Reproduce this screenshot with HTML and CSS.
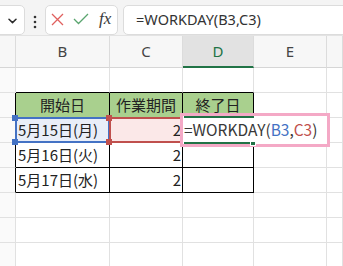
FILE: index.html
```html
<!DOCTYPE html>
<html lang="ja">
<head>
<meta charset="utf-8">
<link rel="stylesheet" href="styles.css">
</head>
<body>
<div class="app">
  <div class="toolbar">
    <div class="namebox">
      <svg class="chev" width="9" height="6" viewBox="0 0 9 6"><path d="M1 1.2 L4.5 4.6 L8 1.2" fill="none" stroke="#2b2b2b" stroke-width="1.5" stroke-linecap="round" stroke-linejoin="round"/></svg>
    </div>
    <svg class="dots" width="4" height="14" viewBox="0 0 4 14"><circle cx="2" cy="2" r="1.3" fill="#333"/><circle cx="2" cy="7" r="1.3" fill="#333"/><circle cx="2" cy="12" r="1.3" fill="#333"/></svg>
    <div class="fxbox">
      <svg class="ico" width="13" height="13" viewBox="0 0 13 13"><path d="M1 1 L12 12 M12 1 L1 12" stroke="#e0605e" stroke-width="1.3" fill="none"/></svg>
      <svg class="ico" width="16" height="12" viewBox="0 0 16 12"><path d="M1 6 L5.5 10.5 L15 1" stroke="#5aa56f" stroke-width="1.3" fill="none"/></svg>
      <span class="fx">fx</span>
    </div>
    <div class="formula">=WORKDAY(B3,C3)</div>
  </div>
  <div class="sheet">
    <div class="c hdr"></div>
    <div class="c hdr">B</div>
    <div class="c hdr">C</div>
    <div class="c hdr act">D</div>
    <div class="c hdr">E</div>
    <div class="c hdr"></div>

    <div class="c rh"></div>
    <div class="c tb"></div>
    <div class="c tb"></div>
    <div class="c tb"></div>
    <div class="c"></div>
    <div class="c"></div>

    <div class="c rh tl"></div>
    <div class="c t th">開始日</div>
    <div class="c t th">作業期間</div>
    <div class="c t th">終了日</div>
    <div class="c"></div>
    <div class="c"></div>

    <div class="c rh tl"></div>
    <div class="c t selb">5月15日(月)
      <div class="bluebox"></div>
      <span class="sq sq-b tlc"></span>
      <span class="sq sq-b blc"></span>
    </div>
    <div class="c t num selr">2
      <div class="redbox"></div>
      <span class="sq sq-r tlc"></span>
      <span class="sq sq-r blc"></span>
    </div>
    <div class="c t act-cell">
      <div class="edit">=WORKDAY(<span class="rb">B3</span>,<span class="rr">C3</span>)
        <span class="gl gtop"></span>
        <span class="gl gbot"></span>
        <span class="handle"></span>
      </div>
    </div>
    <div class="c"></div>
    <div class="c"></div>

    <div class="c rh tl"></div>
    <div class="c t">5月16日(火)</div>
    <div class="c t num">2</div>
    <div class="c t"></div>
    <div class="c"></div>
    <div class="c"></div>

    <div class="c rh tl"></div>
    <div class="c t">5月17日(水)</div>
    <div class="c t num">2</div>
    <div class="c t"></div>
    <div class="c"></div>
    <div class="c"></div>

    <div class="c rh"></div><div class="c"></div><div class="c"></div><div class="c"></div><div class="c"></div><div class="c"></div>
    <div class="c rh"></div><div class="c"></div><div class="c"></div><div class="c"></div><div class="c"></div><div class="c"></div>
    <div class="c rh"></div><div class="c"></div><div class="c"></div><div class="c"></div><div class="c"></div><div class="c"></div>
  </div>
</div>
</body>
</html>
```
FILE: styles.css
```css
* { box-sizing: border-box; }
html, body { margin: 0; padding: 0; background: #fff; }
body { width: 343px; height: 266px; overflow: hidden; font-family: "Noto Sans CJK JP", "Noto Sans", sans-serif; }
.app { width: 343px; height: 266px; overflow: hidden; }

.toolbar {
  height: 36px;
  background: #f4f4f4;
  display: flex;
  align-items: flex-start;
  padding-top: 5px;
  border-bottom: 1px solid #e3e3e3;
}
.namebox {
  width: 30px;
  height: 30px;
  margin-left: -5px;
  background: #fff;
  border: 1px solid #dcdcdc;
  border-radius: 5px;
  display: flex;
  align-items: center;
  justify-content: flex-end;
  padding-right: 7px;
}
.chev { display: block; margin-top: 2px; }
.dots { display: block; margin: 10px 0 0 8px; }
.fxbox {
  margin-left: 8px;
  width: 73px;
  height: 30px;
  background: #fff;
  border: 1px solid #dcdcdc;
  border-radius: 5px;
  display: flex;
  align-items: center;
  padding-left: 5px;
}
.ico { display: block; }
.fxbox .ico:first-child { margin-right: 9px; margin-top: -2px; }
.fxbox .ico:nth-child(2) { margin-top: -2px; }
.fx {
  margin-left: 10px;
  font-family: "Liberation Serif", "DejaVu Serif", serif;
  font-style: italic;
  font-size: 17px;
  color: #3a3a3a;
  line-height: 1;
  margin-top: -3px;
}
.formula {
  margin-left: 5px;
  flex: 1;
  height: 30px;
  margin-right: -8px;
  background: #fff;
  border: 1px solid #dcdcdc;
  border-radius: 5px;
  font-family: "Noto Sans", sans-serif;
  font-size: 14.5px;
  color: #333;
  line-height: 27px;
  padding-left: 12px;
}

.sheet {
  display: grid;
  grid-template-columns: 16px 94px 73px 71px 73px 1fr;
  grid-template-rows: 32px repeat(8, 25px);
}
.c {
  border-right: 1px solid #e1e1e1;
  border-bottom: 1px solid #e1e1e1;
  position: relative;
  font-size: 15px;
  line-height: 24px;
  color: #222;
  white-space: nowrap;
  padding: 0 2px;
}
.hdr {
  background: #f7f7f7;
  font-family: "Noto Sans", sans-serif;
  color: #444;
  font-size: 15px;
  text-align: center;
  line-height: 31px;
  border-right-color: #dcdcdc;
  border-bottom-color: #d6d6d6;
}
.hdr.act {
  background: #e2e2e2;
  color: #217346;
  border-bottom: 2px solid #217346;
  line-height: 30px;
}
.rh { background: #fafafa; }
.rh.tl { border-right-color: #000; }
.tb { border-bottom-color: #000; }
.t { border-right-color: #000; border-bottom-color: #000; }
.th { background: #a9d08e; text-align: center; }
.num { text-align: right; padding-right: 1px; }

.selb { background: #e9eef8; padding-left: 2px; }
.selr { background: #fbe8e8; }
.bluebox {
  position: absolute;
  top: -1px; left: -1px;
  width: 95px; height: 26px;
  border: 2px solid #4472c4;
}
.redbox {
  position: absolute;
  top: -1px; left: -1px;
  width: 74px; height: 26px;
  border: 2px solid #c0504d;
}
.sq {
  position: absolute;
  width: 6px; height: 6px;
  z-index: 3;
}
.sq-b { background: #4472c4; }
.sq-r { background: #c0504d; }
.tlc { top: -3px; left: -4px; }
.blc { top: 21px; left: -4px; }

.act-cell { z-index: 5; }
.edit {
  position: absolute;
  top: -5px; left: -3px;
  width: 150px; height: 34px;
  border: 3px solid #f4a9c6;
  background: #fff;
  font-size: 15.5px;
  line-height: 27px;
  color: #383838;
  padding-left: 1px;
  z-index: 6;
}
.rb { color: #4472c4; }
.rr { color: #c0504d; }
.gl {
  position: absolute;
  left: 1px;
  width: 70px;
  height: 2px;
  background: #217346;
}
.gtop { top: 0; }
.gbot { bottom: 0; }
.handle {
  position: absolute;
  left: 67px; top: 25px;
  width: 6px; height: 5px;
  background: #217346;
  border: 1px solid #fff;
  z-index: 2;
}
```
